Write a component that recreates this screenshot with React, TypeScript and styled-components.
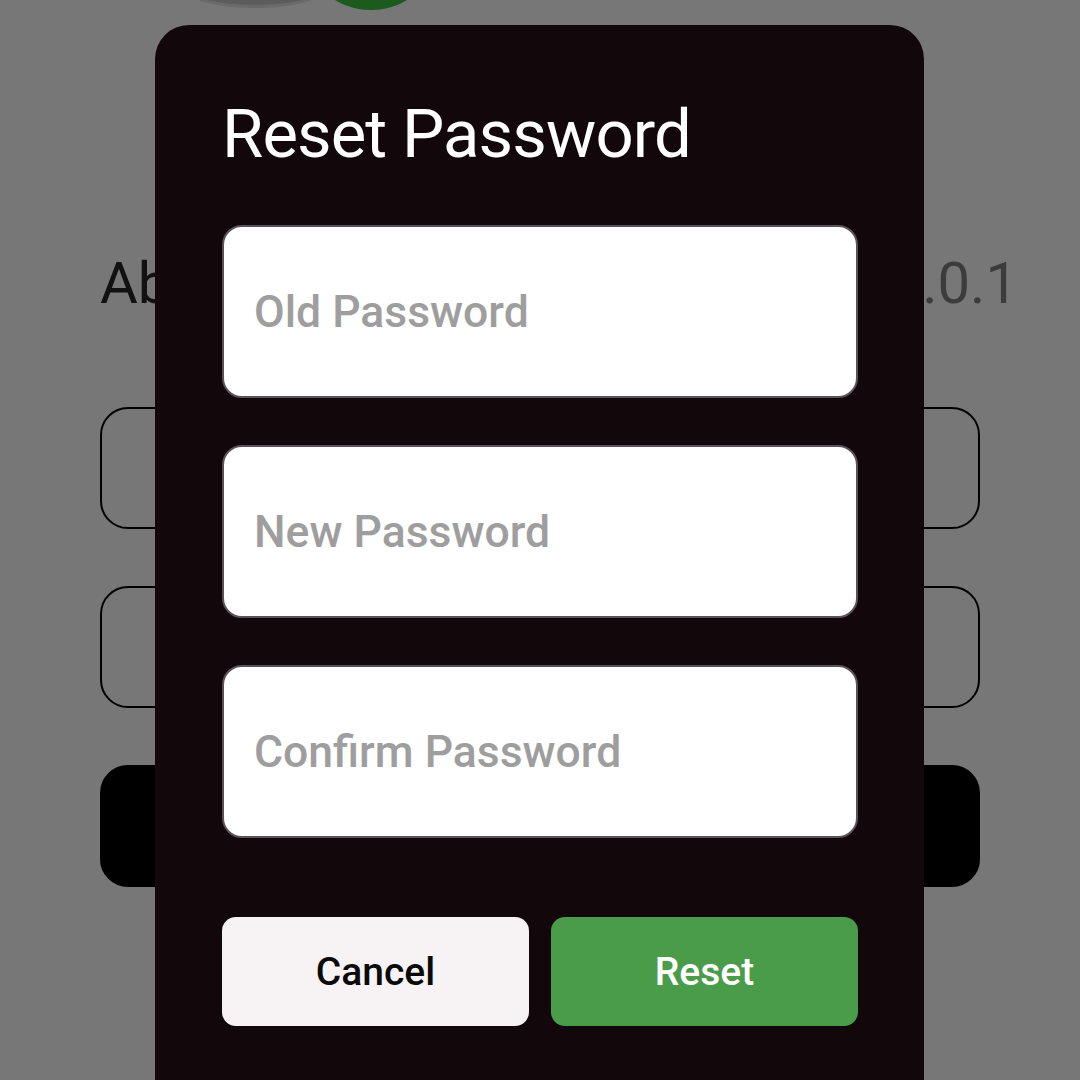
import React from "react";
import styled, { createGlobalStyle } from "styled-components";

const GlobalStyle = createGlobalStyle`
  html, body {
    margin: 0;
    padding: 0;
    background-color: #777777;
    font-family: Roboto, "Noto Sans", sans-serif;
  }
  * {
    box-sizing: border-box;
  }
`;

const Page = styled.div`
  width: 1080px;
  height: 1080px;
  overflow: hidden;
  background-color: #777777;
  padding: 0 100px;
`;

const AvatarRow = styled.div`
  display: flex;
  align-items: flex-end;
  height: 10px;
  margin-left: 90px;
`;

const GrayAvatar = styled.div`
  width: 130px;
  height: 30px;
  margin-bottom: 5px;
  border-radius: 50%;
  background-color: #5c5c5c;
  box-shadow: 0 0 0 3px #6a6a6a;
`;

const GreenAvatar = styled.div`
  flex-shrink: 0;
  width: 140px;
  height: 140px;
  margin-left: -19px;
  border-radius: 50%;
  background-color: #1d5a1d;
`;

const AboutRow = styled.div`
  display: flex;
  justify-content: space-between;
  align-items: baseline;
  margin-top: 243px;
  height: 60px;
  font-size: 58px;
  line-height: 60px;
`;

const AboutLabel = styled.span`
  color: #111111;
`;

const Version = styled.span`
  color: #3c3c3c;
  margin-right: -38px;
`;

const ButtonStack = styled.div`
  display: flex;
  flex-direction: column;
  gap: 57px;
  margin-top: 94px;
`;

const PageButton = styled.div<{ $filled?: boolean }>`
  display: flex;
  justify-content: center;
  align-items: center;
  height: 122px;
  border-radius: 28px;
  border: 2.5px solid #000000;
  background-color: ${(p) => (p.$filled ? "#000000" : "transparent")};
  color: ${(p) => (p.$filled ? "#777777" : "#111111")};
  font-size: 40px;
  font-weight: 500;
`;

const Dialog = styled.div`
  position: fixed;
  top: 25px;
  left: 155px;
  width: 769px;
  height: 1100px;
  padding: 69px 66px 0 67px;
  background-color: #12080b;
  border-radius: 34px;
  display: flex;
  flex-direction: column;
`;

const Title = styled.h1`
  margin: 0;
  color: #ffffff;
  font-size: 67px;
  font-weight: 400;
  line-height: 80px;
  letter-spacing: -0.9px;
`;

const Fields = styled.div`
  display: flex;
  flex-direction: column;
  gap: 47px;
  margin-top: 51px;
`;

const Field = styled.input`
  width: 636px;
  height: 173px;
  padding: 0 30px;
  border: 2px solid #5b5259;
  border-radius: 20px;
  background-color: #ffffff;
  font-family: Roboto, "Noto Sans", sans-serif;
  font-size: 44.5px;
  font-weight: 500;
  color: #222222;
  outline: none;
  &::placeholder {
    color: #9e9e9e;
  }
`;

const Actions = styled.div`
  display: flex;
  gap: 22px;
  margin-top: 79px;
`;

const ActionButton = styled.button<{ $primary?: boolean }>`
  width: 308px;
  height: 109px;
  border: none;
  border-radius: 14px;
  background-color: ${(p) => (p.$primary ? "#4a9c4a" : "#f7f2f4")};
  color: ${(p) => (p.$primary ? "#ffffff" : "#0a0a0a")};
  font-family: Roboto, "Noto Sans", sans-serif;
  font-size: 39px;
  font-weight: 500;
  cursor: pointer;
`;

const App = () => {
  return (
    <>
      <GlobalStyle />
      <Page>
        <AvatarRow>
          <GrayAvatar />
          <GreenAvatar />
        </AvatarRow>
        <AboutRow>
          <AboutLabel>About</AboutLabel>
          <Version>v1.0.1</Version>
        </AboutRow>
        <ButtonStack>
          <PageButton>Reset Password</PageButton>
          <PageButton>Privacy Policy</PageButton>
          <PageButton $filled>Logout</PageButton>
        </ButtonStack>
      </Page>
      <Dialog>
        <Title>Reset Password</Title>
        <Fields>
          <Field type="password" placeholder="Old Password" />
          <Field type="password" placeholder="New Password" />
          <Field type="password" placeholder="Confirm Password" />
        </Fields>
        <Actions>
          <ActionButton>Cancel</ActionButton>
          <ActionButton $primary>Reset</ActionButton>
        </Actions>
      </Dialog>
    </>
  );
};

export default App;
